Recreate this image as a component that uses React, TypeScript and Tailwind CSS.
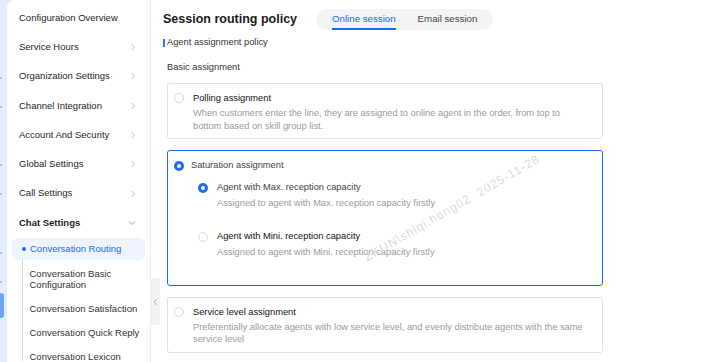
import React from "react";

const ChevronRight = () => (
  <svg width="6" height="8" viewBox="0 0 6 8" fill="none">
    <path d="M1.5 1 L4.5 4 L1.5 7" stroke="#c4c4c4" strokeWidth="1" />
  </svg>
);
const ChevronDown = () => (
  <svg width="8" height="6" viewBox="0 0 8 6" fill="none">
    <path d="M1 1.5 L4 4.5 L7 1.5" stroke="#9a9a9a" strokeWidth="1" />
  </svg>
);

const Radio = ({ on }: { on?: boolean }) =>
  on ? (
    <span className="block w-[10px] h-[10px] rounded-full bg-[#1a6cf3] flex items-center justify-center shrink-0">
      <span className="block w-[4px] h-[4px] rounded-full bg-white" />
    </span>
  ) : (
    <span className="block w-[10px] h-[10px] rounded-full border border-[#dadada] bg-white shrink-0" />
  );

const menu = [
  { t: "Configuration Overview", c: "none" },
  { t: "Service Hours", c: "right" },
  { t: "Organization Settings", c: "right" },
  { t: "Channel Integration", c: "right" },
  { t: "Account And Security", c: "right" },
  { t: "Global Settings", c: "right" },
  { t: "Call Settings", c: "right" },
  { t: "Chat Settings", c: "down" },
];

const Mark = () => <div className="w-[2px] h-[2px] bg-[#b8c2d2] shrink-0" />;

export default function App() {
  return (
    <div
      className="w-[703px] h-[362px] flex bg-[#e4edfc] overflow-hidden relative text-[#262626]"
      style={{ fontFamily: '"Liberation Sans", Arial, sans-serif' }}
    >
      {/* left strip */}
      <div className="w-[7px] shrink-0 flex flex-col">
        <div className="h-[77px] shrink-0" />
        <Mark />
        <div className="h-[27px] shrink-0" />
        <Mark />
        <div className="h-[56px] shrink-0" />
        <Mark />
        <div className="h-[27px] shrink-0" />
        <Mark />
        <div className="h-[57px] shrink-0" />
        <Mark />
        <div className="h-[27px] shrink-0" />
        <Mark />
        <div className="h-[10px] shrink-0" />
        <div className="w-[4px] h-[25px] bg-[#6ea4f8] rounded-r-[3px] shrink-0" />
      </div>

      {/* white area */}
      <div className="flex-1 bg-white rounded-tl-[8px] flex">
        {/* sidebar */}
        <div className="w-[144px] shrink-0 border-r border-[#ededed] flex flex-col pt-[3.2px]">
          {menu.map((m) => (
            <div
              key={m.t}
              className={`h-[29.3px] shrink-0 flex items-center justify-between pl-[12px] pr-[14px] text-[9.5px] ${
                m.c === "down" ? "font-bold text-[#1f1f1f]" : ""
              }`}
            >
              <span>{m.t}</span>
              {m.c === "right" && <ChevronRight />}
              {m.c === "down" && <ChevronDown />}
            </div>
          ))}
          <div className="mt-[0.5px] relative">
            <div className="mx-[5px] h-[22px] rounded-[6px] bg-[#eef3fd] flex items-center pl-[10px] relative">
              <span className="block w-[4px] h-[4px] rounded-full bg-[#1a6cf3] mr-[4px]" />
              <span className="text-[9.5px] text-[#1a6cf3]">Conversation Routing</span>
            </div>
            <div className="flex">
              <div className="w-[16px] shrink-0 flex justify-end">
                <div className="w-px bg-[#d6d6d6] h-[110px] -mt-[9px]" />
              </div>
              <div className="flex flex-col pl-[6.5px] mt-[1.3px] text-[9.5px] leading-[11px] text-[#333]">
                <div className="py-[6.5px]">
                  Conversation Basic
                  <br />
                  Configuration
                </div>
                <div className="py-[6.5px]">Conversation Satisfaction</div>
                <div className="py-[6.5px]">Conversation Quick Reply</div>
                <div className="py-[6.5px]">Conversation Lexicon</div>
              </div>
            </div>
          </div>
        </div>

        {/* collapse handle column */}
        <div className="w-[9px] shrink-0 flex flex-col">
          <div className="h-[278px] shrink-0" />
          <div className="h-[47px] bg-[#f2f2f2] rounded-r-[3px] flex items-center justify-center">
            <svg width="5" height="8" viewBox="0 0 5 8" fill="none">
              <path d="M4 1 L1 4 L4 7" stroke="#b5b5b5" strokeWidth="1" />
            </svg>
          </div>
        </div>

        {/* main */}
        <div className="flex-1 flex flex-col pl-[3px] relative">
          <div className="flex items-center h-[21px] mt-[9px]">
            <span className="text-[12.5px] font-bold text-[#1a1a1a]">Session routing policy</span>
            <div className="ml-[19px] h-[21px] w-[177px] rounded-full bg-[#f3f4f6] flex items-center pl-[16px] text-[9.7px]">
              <div className="relative h-full flex items-center text-[#1a6cf3]">
                Online session
                <span className="absolute left-0 right-0 bottom-[0.5px] h-[1.5px] bg-[#1a6cf3]" />
              </div>
              <div className="ml-[22px] text-[#444]">Email session</div>
            </div>
          </div>

          <div className="flex items-center mt-[9px] h-[8px]">
            <span className="block w-[2px] h-[8px] bg-[#3d6ff0]" />
            <span className="ml-[2px] text-[9.3px] text-[#333]">Agent assignment policy</span>
          </div>

          <div className="mt-[15px] pl-[4px] text-[9.3px] text-[#333] leading-[10px]">Basic assignment</div>

          <div className="mt-[11px] ml-[4px] w-[436px] h-[56px] border border-[#e1e1e1] rounded-[3px] flex items-start pl-[6px] pt-[8.5px]">
            <div className="mt-[0.5px]"><Radio /></div>
            <div className="ml-[9px] flex flex-col">
              <span className="text-[9.3px] leading-[11px] text-[#111]">Polling assignment</span>
              <span className="text-[9.3px] leading-[13.4px] text-[#9b9b9b] mt-[3px] whitespace-nowrap">
                When customers enter the line, they are assigned to online agent in the order, from top to
                <br />
                bottom based on skill group list.
              </span>
            </div>
          </div>

          <div className="mt-[11px] ml-[4px] w-[436px] h-[136px] border border-[#1a6cf3] rounded-[3px] flex flex-col pl-[6px] pt-[10px]">
            <div className="flex items-center h-[10px]">
              <Radio on />
              <span className="ml-[7px] text-[9.3px] text-[#444]">Saturation assignment</span>
            </div>
            <div className="mt-[12px] ml-[24px] flex flex-col">
              <div className="flex items-center h-[10px]">
                <Radio on />
                <span className="ml-[9px] text-[9.3px] text-[#444]">Agent with Max. reception capacity</span>
              </div>
              <div className="ml-[19px] mt-[5px] text-[9.3px] leading-[10px] text-[#9b9b9b]">
                Assigned to agent with Max. reception capacity firstly
              </div>
              <div className="flex items-center h-[10px] mt-[24px]">
                <Radio />
                <span className="ml-[9px] text-[9.3px] text-[#111]">Agent with Mini. reception capacity</span>
              </div>
              <div className="ml-[19px] mt-[5px] text-[9.3px] leading-[10px] text-[#9b9b9b]">
                Assigned to agent with Mini. reception capacity firstly
              </div>
            </div>
          </div>

          <div className="mt-[11px] ml-[4px] w-[436px] h-[56px] border border-[#e1e1e1] rounded-[3px] flex items-start pl-[6px] pt-[8.5px]">
            <div className="mt-[0.5px]"><Radio /></div>
            <div className="ml-[9px] flex flex-col">
              <span className="text-[9.3px] leading-[11px] text-[#111]">Service level assignment</span>
              <span className="text-[9.3px] leading-[12.5px] text-[#9b9b9b] mt-[3px] whitespace-nowrap">
                Preferentially allocate agents with low service level, and evenly distribute agents with the same
                <br />
                service level
              </span>
            </div>
          </div>

          {/* watermark */}
          <div className="absolute left-[292px] top-[208px] w-0 h-0 pointer-events-none">
            <div
              className="absolute left-0 top-0 text-[12px] tracking-[1px] text-[#dcdcdc] whitespace-pre"
              style={{ transform: "translate(-50%, -50%) rotate(-30deg)" }}
            >
              {"ZKUN\\shiqi.hong02  2025-11-28"}
            </div>
          </div>
        </div>
      </div>
    </div>
  );
}
